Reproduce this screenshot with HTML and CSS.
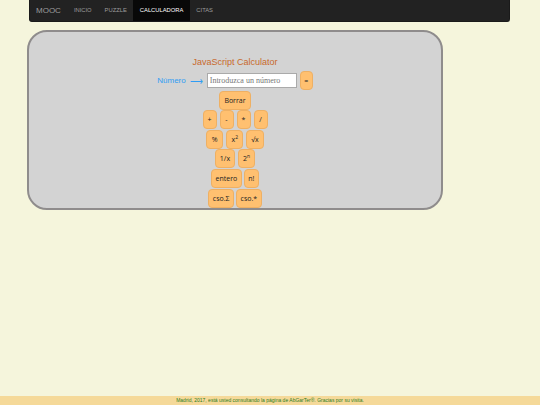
FILE: index.html
```html
<!DOCTYPE html>
<html lang="es">
<head>
    <meta charset="UTF-8">
    <meta name="viewport" content="width=device-width, initial-scale=1.0">
    <title>Calculadora | MOOC</title>
    <link rel="stylesheet" href="styles.css">
</head>
<body>
    <nav class="navbar">
        <a class="brand" href="#">MOOC</a>
        <a class="nav-link" href="#">INICIO</a>
        <a class="nav-link" href="#">PUZZLE</a>
        <a class="nav-link active" href="#">CALCULADORA</a>
        <a class="nav-link" href="#">CITAS</a>
    </nav>
    <main class="panel">
        <h1 class="title">JavaScript Calculator</h1>
        <div class="row input-row">
            <label class="label" for="numero">Número</label>
            <span class="arrow">⟶</span>
            <input class="number" id="numero" type="text" placeholder="Introduzca un número">
            <button class="key equals">=</button>
        </div>
        <div class="row"><button class="key borrar">Borrar</button></div>
        <div class="row">
            <button class="key op">+</button>
            <button class="key op">-</button>
            <button class="key op">*</button>
            <button class="key op">/</button>
        </div>
        <div class="row wide">
            <button class="key">%</button>
            <button class="key">x<sup>2</sup></button>
            <button class="key">√x</button>
        </div>
        <div class="row wide">
            <button class="key">1/x</button>
            <button class="key">2<sup>n</sup></button>
        </div>
        <div class="row tight">
            <button class="key">entero</button>
            <button class="key">n!</button>
        </div>
        <div class="row tight">
            <button class="key">cso.Σ</button>
            <button class="key">cso.*</button>
        </div>
    </main>
    <footer class="footer">Madrid, 2017, está usted consultando la página de AbGarTer®. Gracias por su visita.</footer>
</body>
</html>
```

FILE: styles.css
```css
html, body {
    height: 100%;
}
body {
    margin: 0;
    display: flex;
    flex-direction: column;
    font-family: "Liberation Sans", Arial, sans-serif;
    background-color: #f5f5dc;
}
.navbar {
    display: flex;
    align-items: stretch;
    height: 22px;
    margin-left: 29px;
    width: 481px;
    box-sizing: border-box;
    background-color: #222;
    border: 1px solid #1a1a1a;
    border-top: none;
    border-radius: 0 0 3px 3px;
}
.brand {
    padding: 0 6.5px 0 6px;
    font-size: 8px;
    line-height: 21px;
    color: #9d9d9d;
    text-decoration: none;
}
.nav-link {
    padding: 0 6.5px;
    font-size: 5.8px;
    line-height: 21px;
    color: #9d9d9d;
    text-decoration: none;
}
.nav-link.active {
    color: #fff;
    background-color: #080808;
}
.panel {
    display: flex;
    flex-direction: column;
    align-items: center;
    box-sizing: border-box;
    width: 416px;
    height: 180px;
    margin: 8px 0 0 27px;
    padding-top: 24px;
    background-color: #d3d3d3;
    border: 2px solid #8f8c8c;
    border-radius: 20px;
}
.title {
    margin: 0;
    height: 15px;
    font-size: 9px;
    line-height: 13px;
    font-weight: 400;
    color: #c8692c;
}
.row {
    display: flex;
    justify-content: center;
    align-items: center;
    gap: 3px;
    height: 20px;
}
.wide .key {
    min-width: 17px;
}
.tight {
    gap: 2px;
}
.tight .key {
    padding: 0 3.5px;
}
.label {
    font-size: 8px;
    color: #2f9df4;
}
.arrow {
    margin: 0 1px;
    font-size: 9px;
    color: #2f9df4;
}
.number {
    box-sizing: border-box;
    width: 90px;
    height: 15px;
    padding: 0 2px;
    font-family: "Liberation Serif", serif;
    font-size: 8px;
    background-color: #fff;
    border: 1px solid #aaa;
}
.number::placeholder {
    color: #777;
}
.key {
    height: 19px;
    padding: 0 4px;
    font-family: "Open Sans", sans-serif;
    font-size: 7px;
    color: #222;
    background-color: #ffc070;
    border: 1px solid #eeb064;
    border-radius: 4px;
}
.key sup {
    font-size: 5px;
    line-height: 0;
}
.op {
    width: 14px;
    padding: 0;
}
.equals {
    width: 13px;
    padding: 0;
}
.borrar {
    width: 32px;
    padding: 0;
}
.footer {
    margin-top: auto;
    height: 9px;
    font-size: 5px;
    line-height: 9px;
    text-align: center;
    color: #2e7d1e;
    background-color: #f5d999;
}
```
